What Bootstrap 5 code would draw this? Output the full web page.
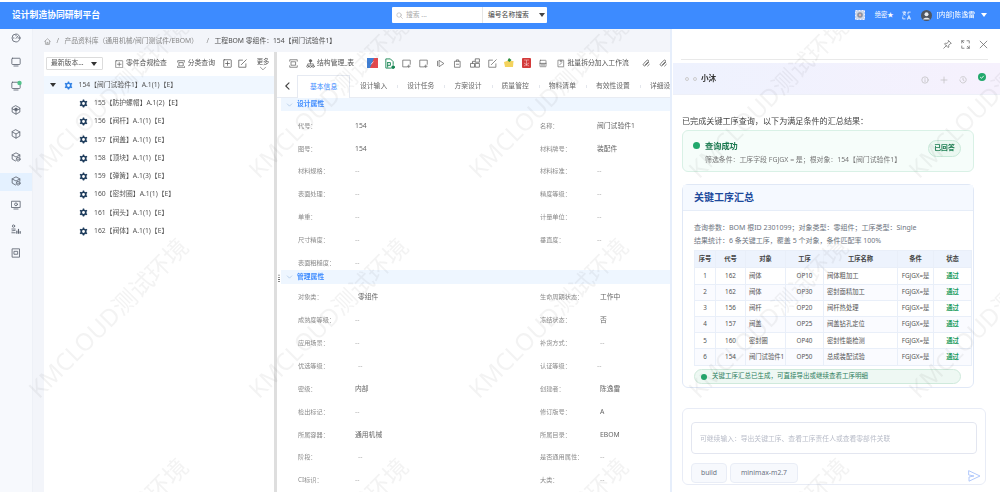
<!DOCTYPE html>
<html lang="zh-CN">
<head>
<meta charset="utf-8">
<title>设计制造协同研制平台</title>
<link href="https://cdn.jsdelivr.net/npm/bootstrap@5.3.0/dist/css/bootstrap.min.css" rel="stylesheet">
<style>
html,body{margin:0;height:492px;overflow:hidden;background:#fff}
body{font-family:"Noto Sans","Noto Sans CJK SC",sans-serif;font-size:6.8px;line-height:1.3;color:#555}
.ic{display:block;flex:none;fill:none;stroke:currentColor;stroke-width:1;stroke-linecap:round;stroke-linejoin:round}
.shell{width:1000px;height:492px;position:relative;padding-top:2px;overflow:hidden;filter:blur(.25px)}
.topbar{height:27.4px;background:#3d8bff;color:#fff;padding:0 0 0 12px;flex:none}
.brand{font-size:8.8px;font-weight:600;width:380px}
.finder{width:154.5px;height:15.5px;background:#fff;color:#777;border-radius:1px;margin-top:-1px}
.finder-q{width:91px;padding-left:4px;gap:3px;color:#aaa;border-right:1px solid #e6e6e6;height:100%}
.finder-t{padding-left:5px;gap:10px;color:#444}
.caret{width:0;height:0;border-left:3.4px solid transparent;border-right:3.4px solid transparent;border-top:4px solid currentColor;flex:none}
.caret.dark{color:#333}
.tools{margin-left:auto;padding-right:13px;margin-top:-1px}
.shot{display:block;margin-right:10px}
.secret{font-size:6.3px;margin-right:8px}
.transico{margin-right:10px}
.whoname{margin-left:5px}
.whocaret{margin-left:6px}
.workbody{height:462.6px}
.rail{width:32.5px;flex:none;background:#f7f9fd;padding-top:1px;gap:5.8px;color:#5d6470;border-right:1px solid #eef1f7}
.railitem{height:18px;display:flex;justify-content:center;padding-top:3px}
.railitem.on{background:#e4f1ff}
.greendot{fill:#52c28a;stroke:none}
.mainwrap{width:637.5px;flex:none;background:#f3f5fa;padding-left:11.5px}
.crumbs{height:22.6px;margin:0;padding-top:1.5px;--bs-breadcrumb-margin-bottom:0;--bs-breadcrumb-item-padding-x:5.5px;--bs-breadcrumb-divider-color:#888;--bs-breadcrumb-item-active-color:#555;font-size:6.8px;color:#888;align-items:center}
.crumbs .breadcrumb-item{color:#888}
.crumbs .breadcrumb-item.active{color:#4d4d4d;margin-left:3px}
.panels{height:440px}
.treepane{width:230px;flex:none;background:#fff}
.treetools{height:23.6px;padding:0 0 0 2px;color:#555}
.vsel{width:57px;height:13px;border:1px solid #dcdcdc;border-radius:1px;padding:0 5px 0 4px;color:#555;margin-right:12px}
.tt{gap:2.5px}
.tt.a{margin-right:10px}
.tt.b{margin-right:8px}
.thin{stroke-width:.9}
.boxbtn{margin-right:6px}
.editbtn{margin-right:8px}
.morebtn{font-size:6.3px;line-height:7px;color:#555;width:16px;padding-top:2px}
.treenode{height:18.25px;padding-left:35px;padding-top:1px;gap:6px;color:#555}
.treenode.root{background:#f0f7ff;padding-left:6px}
.root .caret{margin-right:1.5px}
.gearb{display:block;color:#1e3c5c}
.root .gearb{color:#2f80e4}
.splitter{width:3px;flex:none;background:#dedede}
.detail{width:393px;flex:none;background:#fff;position:relative;overflow:hidden}
.acts{height:23px;padding-left:7.5px;color:#666}
.slot{width:17.14px;flex:none;display:flex;justify-content:center;align-items:center}
.atext{white-space:nowrap;color:#555;flex:none}
.atext.m1{margin-left:-1.7px;margin-right:9.6px}
.atext.m2{margin-left:-1.6px;margin-right:8.4px}
.tabstrip{height:23px;padding-left:20px;padding-top:1px;border-bottom:1px solid #e8ecf3;white-space:nowrap;color:#666}
.backer{width:20px;margin-left:-20px;padding-left:8px;color:#444;flex:none}
.backer .ic{stroke-width:1.1}
.tabcell{padding:0 10px;position:relative;font-size:6.8px;flex:none}
.tabcell+.tabcell::before{content:"";position:absolute;left:0;top:3px;bottom:3px;width:1px;background:#e3e6ec}
.tabcell.on{color:#3d8bff;border:1px solid #e6eaf2;border-bottom:0;background:#fff;height:23px;width:53px;padding:0 12px;margin-top:-1px;margin-bottom:-1px}
.tabcell.on+.tabcell::before{display:none}
.secbar{height:13.3px;background:#eef6ff;margin-left:4px;padding-left:5px;gap:4px;color:#3d8bff;font-weight:600;position:relative}
.secbar .ic{color:#8fb0d8}
.griphold{position:absolute;left:-3px;top:4px;width:2px;height:9px;background-image:radial-gradient(circle,#666 .6px,transparent .7px);background-size:2px 2.2px}
.detail{overflow:hidden}
.propgroup{padding-top:3.4px;margin-bottom:-4.2px}
.propgroup.two{padding-top:2.8px}
.proprow{height:22.85px;padding-left:21px}
.propcell{width:242px;flex:none}
.propk{width:57px;color:#8a8a8a;font-size:6.2px;flex:none}
.propv{color:#666}
.propv.n{color:#aaa}
.propv.sh{margin-left:3px}
.drawer{width:330px;flex:none;background:#fff;border-left:2px solid #e6eefb;position:relative}
.drawerbar{height:31px;margin:0 12px 0 9px;border-bottom:1px solid #e9e9e9;gap:9px;color:#666}
.agentbar{height:32px;margin-top:3px;margin-left:1px;background:linear-gradient(90deg,#eef2fe,#f6f1fd);border-bottom:1px solid #eef0f8;padding:0 14px 0 12px;color:#bbb}
.ringdot{width:4px;height:4px;border:1px solid #ccc;border-radius:50%;margin-right:3.5px}
.agentname{font-size:7.6px;font-weight:600;color:#333;margin-left:1px}
.agenttools{padding-top:2px}
.spaced{margin-left:3px}
.donemark{display:block;margin:-5px 0 0 3px}
.chatpane{padding:20px 14px 0 10px}
.leadline{font-size:8.1px;color:#444;line-height:12px;margin-bottom:3px}
.okcard{width:292px;height:42px;background:#f6fdfa;border:1px solid #d9f1e6;border-radius:6px;padding:0 12px 0 10px}
.okleft{margin-top:3px}
.okdot{width:7px;height:7px;border-radius:50%;background:#22a86c;flex:none}
.oktitle{font-size:8.2px;font-weight:600;color:#17784d;margin-left:5px}
.oksub{padding-left:12px;font-size:6.9px;color:#777;margin-top:5px}
.okpill{width:33px;height:17px;border:1px solid #c8e9d9;border-radius:9px;background:#ebf8f1;color:#1b7f52;font-size:6.8px;font-weight:600;margin-top:-6px}
.sumcard{width:292px;height:204px;margin-top:12px;border:1px solid #e0e8f6;--bs-card-border-color:#e0e8f6;--bs-card-border-radius:6px;--bs-card-inner-border-radius:5px;font-size:7px;color:#6d7480}
.sumhead{height:26px;padding:0 0 0 11px;background:#f5f9ff;border-bottom:1px solid #e6edf8;display:flex;align-items:center;font-size:10px;font-weight:600;color:#1d4a9c}
.sumbody{padding:10px 2px 0 11px}
.sumline{height:13px;line-height:13px;white-space:nowrap}
.steps{width:277px;table-layout:fixed;margin:3px 0 0;--bs-table-border-color:#e9eff9;font-size:6.3px;color:#555;--bs-table-bg:transparent}
.steps th,.steps td{padding:0;height:16.2px;vertical-align:middle;text-align:center;border:1px solid #e9eff9;white-space:nowrap;overflow:hidden}
.steps th{background:#edf3fd;color:#444;font-weight:600;height:17px}
.steps tr:nth-child(even) td{background:#fafbff}
.steps .lf{text-align:left;padding-left:3px}
.steps .pass{color:#159a5b;font-weight:600}
.w21{width:21px}.w30{width:30px}.w40{width:40px}.w38{width:38px}.w74{width:74px}.w36{width:36px}
.donepill{width:267px;height:15px;margin-top:3.500px;background:#eef8f3;border:1px solid #cfeadc;border-radius:8px;padding-left:6px;gap:5px;color:#2f8060;font-size:6.5px}
.donepill .okdot{width:6px;height:6px}
.composer{width:304px;height:77px;margin-top:20px;border:1px solid #e8ecf6;border-radius:6px;padding:13px 8px 0 8px;position:relative}
.askbox{height:32px;border:1px solid #e3e6f0;border-radius:4px;padding:0 8px;font-size:6.8px;color:#555;display:block;width:100%}
.askbox::placeholder{color:#b9bdc9;opacity:1}
.chipbtn{--bs-btn-padding-y:0;--bs-btn-padding-x:0;--bs-btn-font-size:6.8px;--bs-btn-border-radius:4px;--bs-btn-border-color:#e9edf6;--bs-btn-bg:#f7f9fd;--bs-btn-color:#6b7180;height:20px;margin-top:9px}
.chipa{width:36px;margin-right:3px}.chipb{width:68px}
.sendico{position:absolute;right:4px;bottom:2px;color:#a9c3fb;stroke-width:.9}
.wmlayer{position:absolute;left:-2px;top:30px;width:1100px;height:462px;overflow:hidden;pointer-events:none;z-index:5}
.wmgrid{display:grid;grid-template-columns:repeat(5,220px);grid-auto-rows:220px;margin-top:-42px}
.wmcell{display:flex;align-items:center;justify-content:center}
.wmcell span{transform:rotate(-45deg);white-space:nowrap;font-size:24px;color:rgba(90,90,90,.07)}
</style>
</head>
<body>
<svg width="0" height="0" class="position-absolute">
<defs>
<symbol id="gear" viewBox="0 0 12 12"><circle cx="6" cy="6" r="3" fill="none" stroke="currentColor" stroke-width="2.2"/><path d="M6 .6v2M6 9.400v2M1.300 3.300l1.700 1M9 7.700l1.700 1M1.300 8.700l1.700-1M9 4.300l1.700-1" stroke="currentColor" stroke-width="1.900" stroke-linecap="butt"/></symbol>
<symbol id="gauge" viewBox="0 0 12 12"><circle cx="6" cy="6" r="4.800"/><path d="M6 6.500 8.300 3.800M2.600 6h1M8.500 6h1M6 2.400v1"/></symbol>
<symbol id="screen" viewBox="0 0 12 12"><rect x="1" y="1.500" width="10" height="7.500" rx=".8"/><path d="M3.500 10.800h5"/></symbol>
<symbol id="cube" viewBox="0 0 12 12"><path d="M6 1l4.600 2.500v5L6 11 1.400 8.500v-5zM1.400 3.500 6 6l4.600-2.500M6 6v5"/></symbol>
<symbol id="cubefill" viewBox="0 0 12 12"><path d="M6 1l4.600 2.500v5L6 11 1.400 8.500v-5z"/><path d="M1.400 4.500 6 7l4.600-2.500M6 7v4"/><path d="M3 5 6 3l3 2-3 1.600z" fill="currentColor" stroke="none"/></symbol>
<symbol id="cubetag" viewBox="0 0 12 12"><path d="M5.500 10.800 1.400 8.500v-5L6 1l4.600 2.500v2.500M1.400 3.500 6 6l4.600-2.500"/><circle cx="8.600" cy="8.600" r="2.300"/><path d="M7.700 8.600h1.800"/></symbol>
<symbol id="screencog" viewBox="0 0 12 12"><rect x="1" y="1.500" width="10" height="7.500"/><circle cx="6" cy="5.200" r="1.700"/><path d="M3.500 10.800h5"/></symbol>
<symbol id="nodes" viewBox="0 0 12 12"><circle cx="3" cy="2.500" r="1.400"/><path d="M1 6h4M1.200 8.200l3.800-.6M1 10.500h4"/><path d="M7 11V8.500M9 11V6.500M11 11V9" stroke-width="1.400"/></symbol>
<symbol id="pagebox" viewBox="0 0 12 12"><rect x="1.800" y="1" width="8.400" height="10"/><rect x="4" y="4" width="4" height="3.500"/></symbol>
<symbol id="home" viewBox="0 0 12 12"><path d="M1 6 6 1.200 11 6M2.500 5v5.800h7V5M5 10.800V7.500h2v3.300"/></symbol>
<symbol id="search" viewBox="0 0 12 12"><circle cx="5.200" cy="5.200" r="3.800"/><path d="M8 8l3 3"/></symbol>
<symbol id="plusbox" viewBox="0 0 12 12"><rect x="1" y="1" width="10" height="10" rx=".6"/><path d="M6 3.500v5M3.500 6h5"/></symbol>
<symbol id="editbox" viewBox="0 0 12 12"><path d="M10.500 6.500V11H1V1.500h5"/><path d="M4.500 7.500 11 1"/></symbol>
<symbol id="scan" viewBox="0 0 12 12"><path d="M1 3V1h10v2M1 9v2h10V9"/><rect x="3.200" y="3.700" width="5.600" height="4.600"/></symbol>
<symbol id="orgtree" viewBox="0 0 12 12"><circle cx="6" cy="2.400" r="1.600" fill="currentColor"/><path d="M6 4v2.500M2.300 8.500V6.500h7.400v2"/><circle cx="2.300" cy="9.800" r="1.400"/><circle cx="6" cy="9.800" r="1.400"/><circle cx="9.700" cy="9.800" r="1.400"/></symbol>
<symbol id="docadd" viewBox="0 0 12 12"><path d="M7 10.500H1V1.500h10v5.500"/><path d="M9 8v3.500M7.200 9.700h3.600"/></symbol>
<symbol id="play" viewBox="0 0 12 12"><path d="M4.500 2 10.500 6l-6 4zM2 3v6"/></symbol>
<symbol id="bin" viewBox="0 0 12 12"><rect x="2.500" y="3" width="7" height="8"/><path d="M4.500 3V1.200h3V3M4.500 7h3"/></symbol>
<symbol id="blocks" viewBox="0 0 12 12"><rect x="1" y="6.500" width="4.500" height="4.500"/><rect x="6.800" y="6.500" width="4.500" height="4.500"/><rect x="6.800" y="1" width="4.500" height="4"/><path d="M5.500 4H3v2.500"/></symbol>
<symbol id="saveish" viewBox="0 0 12 12"><rect x="1.500" y="1.200" width="9" height="9.600" rx=".6"/><path d="M1.500 5.800h9M3.500 8.200h5" stroke-width="1.300"/></symbol>
<symbol id="noteedit" viewBox="0 0 12 12"><path d="M2 1h8v10H2z"/><path d="M5 1v2.500h2.200V1M4 8l3-3"/></symbol>
<symbol id="clip" viewBox="0 0 12 12"><path d="M10 5 5.500 9.500a2 2 0 1 1-2.800-2.800L7.500 2a1.300 1.300 0 0 1 2 2L5 8.500" stroke-width="1.300"/><path d="M11 8l-2.500 2.500" stroke-width="1.300"/></symbol>
<symbol id="pin" viewBox="0 0 12 12"><path d="M7.500 1 11 4.500 9.500 5l-2 2 .3 2.300-1 .9L2 5.200l1-1 2.200.4 2-2zM4.500 7.500 1 11"/></symbol>
<symbol id="expand" viewBox="0 0 12 12"><path d="M1 4V1h3M8 1h3v3M11 8v3H8M4 11H1V8"/><path d="M1 1l2.500 2.500M11 11 8.500 8.500"/></symbol>
<symbol id="closex" viewBox="0 0 12 12"><path d="M1.500 1.500l9 9M10.500 1.500l-9 9"/></symbol>
<symbol id="chev" viewBox="0 0 12 12"><path d="M1.500 3.800 6 8.300l4.500-4.500"/></symbol>
<symbol id="info" viewBox="0 0 12 12"><circle cx="6" cy="6" r="4.800"/><path d="M6 5.500v3M6 3.400v.3"/></symbol>
<symbol id="plus" viewBox="0 0 12 12"><path d="M6 1.500v9M1.500 6h9"/></symbol>
<symbol id="clock" viewBox="0 0 12 12"><path d="M2 3a4.800 4.800 0 1 1-.8 3"/><path d="M6 3.400V6l1.800 1.200"/></symbol>
<symbol id="trans" viewBox="0 0 12 12"><path d="M1 1.500h4M3 1v1M1.500 5.500C3 5 4.500 3.500 4.500 2M1.800 3c.6 1.300 2 2 3 2.500M7.500 11 9.300 6l1.800 5M8 9.500h2.800M1 8v2.500h3M11 1.500H8V4"/></symbol>
</defs>
</svg>

<div class="shell d-flex flex-column">
  <header class="topbar d-flex align-items-center">
    <div class="brand">设计制造协同研制平台</div>
    <div class="finder d-flex align-items-center">
      <div class="finder-q d-flex align-items-center"><svg class="ic" width="7" height="7"><use href="#search"/></svg><span>搜索 ...</span></div>
      <div class="finder-t d-flex align-items-center"><span>编号名称搜索</span><i class="caret"></i></div>
    </div>
    <div class="tools d-flex align-items-center">
      <svg width="10" height="10" viewBox="0 0 10 10" class="shot"><rect x=".5" y=".5" width="9" height="9" fill="#cfd8e8" stroke="#eef" stroke-dasharray="2 1"/><circle cx="5" cy="5" r="2.800" fill="#8c93a3"/><circle cx="5" cy="5" r="1.200" fill="#e6b9a8"/></svg>
      <span class="secret">绝密★</span>
      <svg class="ic transico" width="9" height="9"><use href="#trans"/></svg>
      <svg width="11" height="11" viewBox="0 0 11 11" class="d-block"><circle cx="5.500" cy="5.500" r="5.500" fill="#4f5560"/><circle cx="5.500" cy="4.200" r="2" fill="#e8eaee"/><path d="M2 9.500C2.600 7.300 8.400 7.300 9 9.500z" fill="#e8eaee"/></svg>
      <span class="whoname">[内部]陈逸雷</span>
      <i class="caret whocaret"></i>
    </div>
  </header>

  <div class="workbody d-flex">
    <nav class="rail d-flex flex-column">
      <div class="railitem"><svg class="ic" width="10" height="10"><use href="#gauge"/></svg></div>
      <div class="railitem"><svg class="ic" width="10" height="10"><use href="#screen"/></svg></div>
      <div class="railitem"><svg class="ic overflow-visible" width="10" height="10"><use href="#screen"/><circle class="greendot" cx="8.500" cy="2" r="2.200"/></svg></div>
      <div class="railitem"><svg class="ic" width="10" height="10"><use href="#cubefill"/></svg></div>
      <div class="railitem"><svg class="ic" width="10" height="10"><use href="#cube"/></svg></div>
      <div class="railitem"><svg class="ic" width="10" height="10"><use href="#cubetag"/></svg></div>
      <div class="railitem on"><svg class="ic" width="10" height="10"><use href="#cubetag"/></svg></div>
      <div class="railitem"><svg class="ic" width="10" height="10"><use href="#screencog"/></svg></div>
      <div class="railitem"><svg class="ic" width="10" height="10"><use href="#nodes"/></svg></div>
      <div class="railitem"><svg class="ic" width="10" height="10"><use href="#pagebox"/></svg></div>
    </nav>

    <div class="mainwrap d-flex flex-column">
      <ol class="breadcrumb crumbs d-flex">
        <li class="breadcrumb-item"><svg class="ic" width="7" height="7"><use href="#home"/></svg></li>
        <li class="breadcrumb-item">产品资料库（通用机械/阀门测试件/EBOM）</li>
        <li class="breadcrumb-item active">工程BOM 零组件：154【阀门试验件1】</li>
      </ol>
      <div class="panels d-flex">
        <section class="treepane">
          <div class="treetools d-flex align-items-center">
            <div class="vsel d-flex align-items-center justify-content-between"><span>最新版本...</span><i class="caret dark"></i></div>
            <div class="tt a d-flex align-items-center"><svg class="ic thin" width="8.500" height="8.500"><use href="#plusbox"/></svg><span>零件合规检查</span></div>
            <div class="tt b d-flex align-items-center"><svg class="ic" width="8.500" height="8.500"><use href="#scan"/></svg><span>分类查询</span></div>
            <svg class="ic boxbtn" width="9" height="9"><use href="#plusbox"/></svg>
            <svg class="ic editbtn" width="9" height="9"><use href="#editbox"/></svg>
            <div class="morebtn d-flex flex-column align-items-center"><span>更多</span><svg class="ic" width="8" height="7"><use href="#chev"/></svg></div>
          </div>
          <div class="treenode root d-flex align-items-center"><i class="caret dark"></i><svg width="9" height="9" class="gearb"><use href="#gear"/></svg><span>154【阀门试验件1】A.1(1)【E】</span></div>
          <div class="treenode d-flex align-items-center"><svg width="9" height="9" class="gearb"><use href="#gear"/></svg><span>155【防护螺帽】A.1(2)【E】</span></div>
          <div class="treenode d-flex align-items-center"><svg width="9" height="9" class="gearb"><use href="#gear"/></svg><span>156【阀杆】A.1(1)【E】</span></div>
          <div class="treenode d-flex align-items-center"><svg width="9" height="9" class="gearb"><use href="#gear"/></svg><span>157【阀盖】A.1(1)【E】</span></div>
          <div class="treenode d-flex align-items-center"><svg width="9" height="9" class="gearb"><use href="#gear"/></svg><span>158【顶块】A.1(1)【E】</span></div>
          <div class="treenode d-flex align-items-center"><svg width="9" height="9" class="gearb"><use href="#gear"/></svg><span>159【弹簧】A.1(3)【E】</span></div>
          <div class="treenode d-flex align-items-center"><svg width="9" height="9" class="gearb"><use href="#gear"/></svg><span>160【密封圈】A.1(1)【E】</span></div>
          <div class="treenode d-flex align-items-center"><svg width="9" height="9" class="gearb"><use href="#gear"/></svg><span>161【阀头】A.1(1)【E】</span></div>
          <div class="treenode d-flex align-items-center"><svg width="9" height="9" class="gearb"><use href="#gear"/></svg><span>162【阀体】A.1(1)【E】</span></div>
        </section>
        <div class="splitter"></div>
        <section class="detail">
          <div class="acts d-flex align-items-center">
            <div class="slot"><svg class="ic" width="9" height="9"><use href="#scan"/></svg></div>
            <div class="slot"><svg class="ic" width="9" height="9"><use href="#orgtree"/></svg></div>
            <span class="atext m1">结构管理_表</span>
            <div class="slot"><svg width="11" height="10" viewBox="0 0 11 10" class="d-block"><rect width="11" height="10" fill="#e5484d"/><path d="M0 0h7L3 10H0z" fill="#3f7fd6"/><path d="M3.800 6.500 6.500 3.500" stroke="#fff" stroke-width=".7"/></svg></div>
            <div class="slot"><svg class="ic text-success" width="11" height="11" viewBox="0 0 12 12"><path d="M8 11H2V1h5l3 3v3M4 5h3v3H4M4 5v5"/><circle cx="10" cy="10" r="1.500" fill="currentColor"/></svg></div>
            <div class="slot"><svg class="ic" width="9" height="9"><use href="#docadd"/></svg></div>
            <div class="slot"><svg class="ic" width="9" height="9"><use href="#docadd"/></svg></div>
            <div class="slot"><svg class="ic" width="9" height="9"><use href="#play"/></svg></div>
            <div class="slot"><svg class="ic" width="9" height="9"><use href="#bin"/></svg></div>
            <div class="slot"><svg class="ic" width="10" height="10"><use href="#blocks"/></svg></div>
            <div class="slot"><svg class="ic" width="9" height="9"><use href="#editbox"/></svg></div>
            <div class="slot"><svg width="10" height="10" viewBox="0 0 10 10" class="d-block"><path d="M0 4 3 3h6.500L9 9H1z" fill="#f4d35e"/><path d="M5 0l2.500 2-2 2-2-1.500z" fill="#2f8f3e"/></svg></div>
            <div class="slot"><svg width="9" height="10" viewBox="0 0 9 10" class="d-block"><rect width="9" height="10" rx="1" fill="#d33a3a"/><path d="M2 2h5M4.500 2v6M2 5l5 3M7 5 2 8" stroke="#f6caca" stroke-width=".6"/></svg></div>
            <div class="slot"><svg class="ic" width="8" height="9"><use href="#saveish"/></svg></div>
            <div class="slot"><svg class="ic" width="8" height="9"><use href="#noteedit"/></svg></div>
            <span class="atext m2">批量拆分加入工作流</span>
            <div class="slot"><svg class="ic" width="8" height="8"><use href="#clip"/></svg></div>
            <div class="slot"><svg class="ic" width="8" height="8"><use href="#clip"/></svg></div>
          </div>
          <div class="tabstrip d-flex align-items-center">
            <div class="backer"><svg class="ic" width="5" height="8" viewBox="0 0 5 8"><path d="M4 .8.800 4 4 7.200"/></svg></div>
            <div class="tabcell on d-flex align-items-center">基本信息</div>
            <div class="tabcell">设计输入</div>
            <div class="tabcell">设计任务</div>
            <div class="tabcell">方案设计</div>
            <div class="tabcell">质量管控</div>
            <div class="tabcell">物料清单</div>
            <div class="tabcell">有效性设置</div>
            <div class="tabcell">详细设计</div>
          </div>

          <div class="secbar d-flex align-items-center"><svg class="ic" width="7" height="6"><use href="#chev"/></svg><span>设计属性</span></div>
          <div class="propgroup">
            <div class="proprow d-flex align-items-center"><div class="propcell d-flex"><span class="propk">代号：</span><span class="propv">154</span></div><div class="propcell d-flex"><span class="propk">名称：</span><span class="propv">阀门试验件1</span></div></div>
            <div class="proprow d-flex align-items-center"><div class="propcell d-flex"><span class="propk">图号：</span><span class="propv">154</span></div><div class="propcell d-flex"><span class="propk">材料牌号：</span><span class="propv">装配件</span></div></div>
            <div class="proprow d-flex align-items-center"><div class="propcell d-flex"><span class="propk">材料规格：</span><span class="propv n">--</span></div><div class="propcell d-flex"><span class="propk">材料标准：</span><span class="propv n">--</span></div></div>
            <div class="proprow d-flex align-items-center"><div class="propcell d-flex"><span class="propk">表面处理：</span><span class="propv n">--</span></div><div class="propcell d-flex"><span class="propk">精度等级：</span><span class="propv n">--</span></div></div>
            <div class="proprow d-flex align-items-center"><div class="propcell d-flex"><span class="propk">单重：</span><span class="propv n">--</span></div><div class="propcell d-flex"><span class="propk">计量单位：</span><span class="propv n">--</span></div></div>
            <div class="proprow d-flex align-items-center"><div class="propcell d-flex"><span class="propk">尺寸精度：</span><span class="propv n">--</span></div><div class="propcell d-flex"><span class="propk">垂直度：</span><span class="propv n">--</span></div></div>
            <div class="proprow d-flex align-items-center"><div class="propcell d-flex"><span class="propk">表面粗糙度：</span><span class="propv n">--</span></div></div>
          </div>
          <div class="secbar d-flex align-items-center"><i class="griphold"></i><svg class="ic" width="7" height="6"><use href="#chev"/></svg><span>管理属性</span></div>
          <div class="propgroup two">
            <div class="proprow d-flex align-items-center"><div class="propcell d-flex"><span class="propk">对象类：</span><span class="propv sh">零组件</span></div><div class="propcell d-flex"><span class="propk">生命周期状态：</span><span class="propv sh">工作中</span></div></div>
            <div class="proprow d-flex align-items-center"><div class="propcell d-flex"><span class="propk">成熟度等级：</span><span class="propv n">--</span></div><div class="propcell d-flex"><span class="propk">冻结状态：</span><span class="propv sh">否</span></div></div>
            <div class="proprow d-flex align-items-center"><div class="propcell d-flex"><span class="propk">应用场景：</span><span class="propv n">--</span></div><div class="propcell d-flex"><span class="propk">补货方式：</span><span class="propv n sh">--</span></div></div>
            <div class="proprow d-flex align-items-center"><div class="propcell d-flex"><span class="propk">优选等级：</span><span class="propv n sh">--</span></div><div class="propcell d-flex"><span class="propk">认证等级：</span><span class="propv n">--</span></div></div>
            <div class="proprow d-flex align-items-center"><div class="propcell d-flex"><span class="propk">密级：</span><span class="propv">内部</span></div><div class="propcell d-flex"><span class="propk">创建者：</span><span class="propv sh">陈逸雷</span></div></div>
            <div class="proprow d-flex align-items-center"><div class="propcell d-flex"><span class="propk">检出标记：</span><span class="propv n">--</span></div><div class="propcell d-flex"><span class="propk">修订版号：</span><span class="propv sh">A</span></div></div>
            <div class="proprow d-flex align-items-center"><div class="propcell d-flex"><span class="propk">所属容器：</span><span class="propv">通用机械</span></div><div class="propcell d-flex"><span class="propk">所属目录：</span><span class="propv sh">EBOM</span></div></div>
            <div class="proprow d-flex align-items-center"><div class="propcell d-flex"><span class="propk">阶段：</span><span class="propv n sh">--</span></div><div class="propcell d-flex"><span class="propk">是否通用属性：</span><span class="propv n sh">--</span></div></div>
            <div class="proprow d-flex align-items-center"><div class="propcell d-flex"><span class="propk">CI标识：</span><span class="propv n">--</span></div><div class="propcell d-flex"><span class="propk">大类：</span><span class="propv n sh">--</span></div></div>
          </div>
        </section>
      </div>
    </div>

    <aside class="drawer">
      <div class="drawerbar d-flex align-items-center justify-content-end">
        <svg class="ic" width="9" height="9"><use href="#pin"/></svg>
        <svg class="ic" width="9" height="9"><use href="#expand"/></svg>
        <svg class="ic" width="9" height="9"><use href="#closex"/></svg>
      </div>
      <div class="agentbar d-flex align-items-center">
        <i class="ringdot"></i><i class="ringdot"></i><span class="agentname">小沐</span>
        <div class="agenttools ms-auto d-flex align-items-center gap-2">
          <svg class="ic" width="8" height="8"><use href="#info"/></svg>
          <svg class="ic spaced" width="8" height="8"><use href="#plus"/></svg>
          <svg class="ic spaced" width="8" height="8"><use href="#clock"/></svg>
          <svg width="8" height="8" viewBox="0 0 8 8" class="donemark"><circle cx="4" cy="4" r="4" fill="#22a86c"/><path d="M2.200 4.100 3.500 5.300 5.800 2.800" fill="none" stroke="#fff" stroke-width=".9"/></svg>
        </div>
      </div>
      <div class="chatpane">
        <div class="leadline">已完成关键工序查询，以下为满足条件的汇总结果：</div>
        <div class="okcard d-flex align-items-center justify-content-between">
          <div class="okleft">
            <div class="d-flex align-items-center"><i class="okdot"></i><span class="oktitle">查询成功</span></div>
            <div class="oksub">筛选条件：工序字段 FGJGX = 是；根对象：154【阀门试验件1】</div>
          </div>
          <div class="okpill d-flex align-items-center justify-content-center">已回答</div>
        </div>
        <div class="card sumcard">
          <div class="sumhead">关键工序汇总</div>
          <div class="sumbody">
            <div class="sumline">查询参数：BOM 根ID 2301099；对象类型：零组件；工序类型：Single</div>
            <div class="sumline">结果统计：6 条关键工序，覆盖 5 个对象，条件匹配率 100%</div>
            <table class="table steps">
              <colgroup><col class="w21"><col class="w30"><col class="w40"><col class="w38"><col class="w74"><col class="w36"><col class="w38"></colgroup>
              <thead><tr><th>序号</th><th>代号</th><th>对象</th><th>工序</th><th>工序名称</th><th>条件</th><th>状态</th></tr></thead>
              <tbody>
                <tr><td>1</td><td>162</td><td class="lf">阀体</td><td>OP10</td><td class="lf">阀体粗加工</td><td>FGJGX=是</td><td class="pass">通过</td></tr>
                <tr><td>2</td><td>162</td><td class="lf">阀体</td><td>OP30</td><td class="lf">密封面精加工</td><td>FGJGX=是</td><td class="pass">通过</td></tr>
                <tr><td>3</td><td>156</td><td class="lf">阀杆</td><td>OP20</td><td class="lf">阀杆热处理</td><td>FGJGX=是</td><td class="pass">通过</td></tr>
                <tr><td>4</td><td>157</td><td class="lf">阀盖</td><td>OP25</td><td class="lf">阀盖钻孔定位</td><td>FGJGX=是</td><td class="pass">通过</td></tr>
                <tr><td>5</td><td>160</td><td class="lf">密封圈</td><td>OP40</td><td class="lf">密封性能检测</td><td>FGJGX=是</td><td class="pass">通过</td></tr>
                <tr><td>6</td><td>154</td><td class="lf">阀门试验件1</td><td>OP50</td><td class="lf">总成装配试验</td><td>FGJGX=是</td><td class="pass">通过</td></tr>
              </tbody>
            </table>
            <div class="donepill d-flex align-items-center"><i class="okdot"></i><span>关键工序汇总已生成，可直接导出或继续查看工序明细</span></div>
          </div>
        </div>
        <div class="composer">
          <input class="form-control askbox" placeholder="可继续输入：导出关键工序、查看工序责任人或查看零部件关联">
          <button class="btn chipbtn chipa" type="button">build</button><button class="btn chipbtn chipb" type="button">minimax-m2.7</button>
          <svg class="ic sendico" width="13" height="12" viewBox="0 0 13 12"><path d="M1 .8 12 6 1 11.200V7l5-1-5-1z"/></svg>
        </div>
      </div>
    </aside>
  </div>

  <div class="wmlayer"><div class="wmgrid">
    <div class="wmcell"><span>KMCLOUD测试环境</span></div><div class="wmcell"><span>KMCLOUD测试环境</span></div><div class="wmcell"><span>KMCLOUD测试环境</span></div><div class="wmcell"><span>KMCLOUD测试环境</span></div><div class="wmcell"><span>KMCLOUD测试环境</span></div>
    <div class="wmcell"><span>KMCLOUD测试环境</span></div><div class="wmcell"><span>KMCLOUD测试环境</span></div><div class="wmcell"><span>KMCLOUD测试环境</span></div><div class="wmcell"><span>KMCLOUD测试环境</span></div><div class="wmcell"><span>KMCLOUD测试环境</span></div>
    <div class="wmcell"><span>KMCLOUD测试环境</span></div><div class="wmcell"><span>KMCLOUD测试环境</span></div><div class="wmcell"><span>KMCLOUD测试环境</span></div><div class="wmcell"><span>KMCLOUD测试环境</span></div><div class="wmcell"><span>KMCLOUD测试环境</span></div>
  </div></div>
</div>
<script src="https://cdn.jsdelivr.net/npm/bootstrap@5.3.0/dist/js/bootstrap.bundle.min.js"></script>
</body>
</html>
